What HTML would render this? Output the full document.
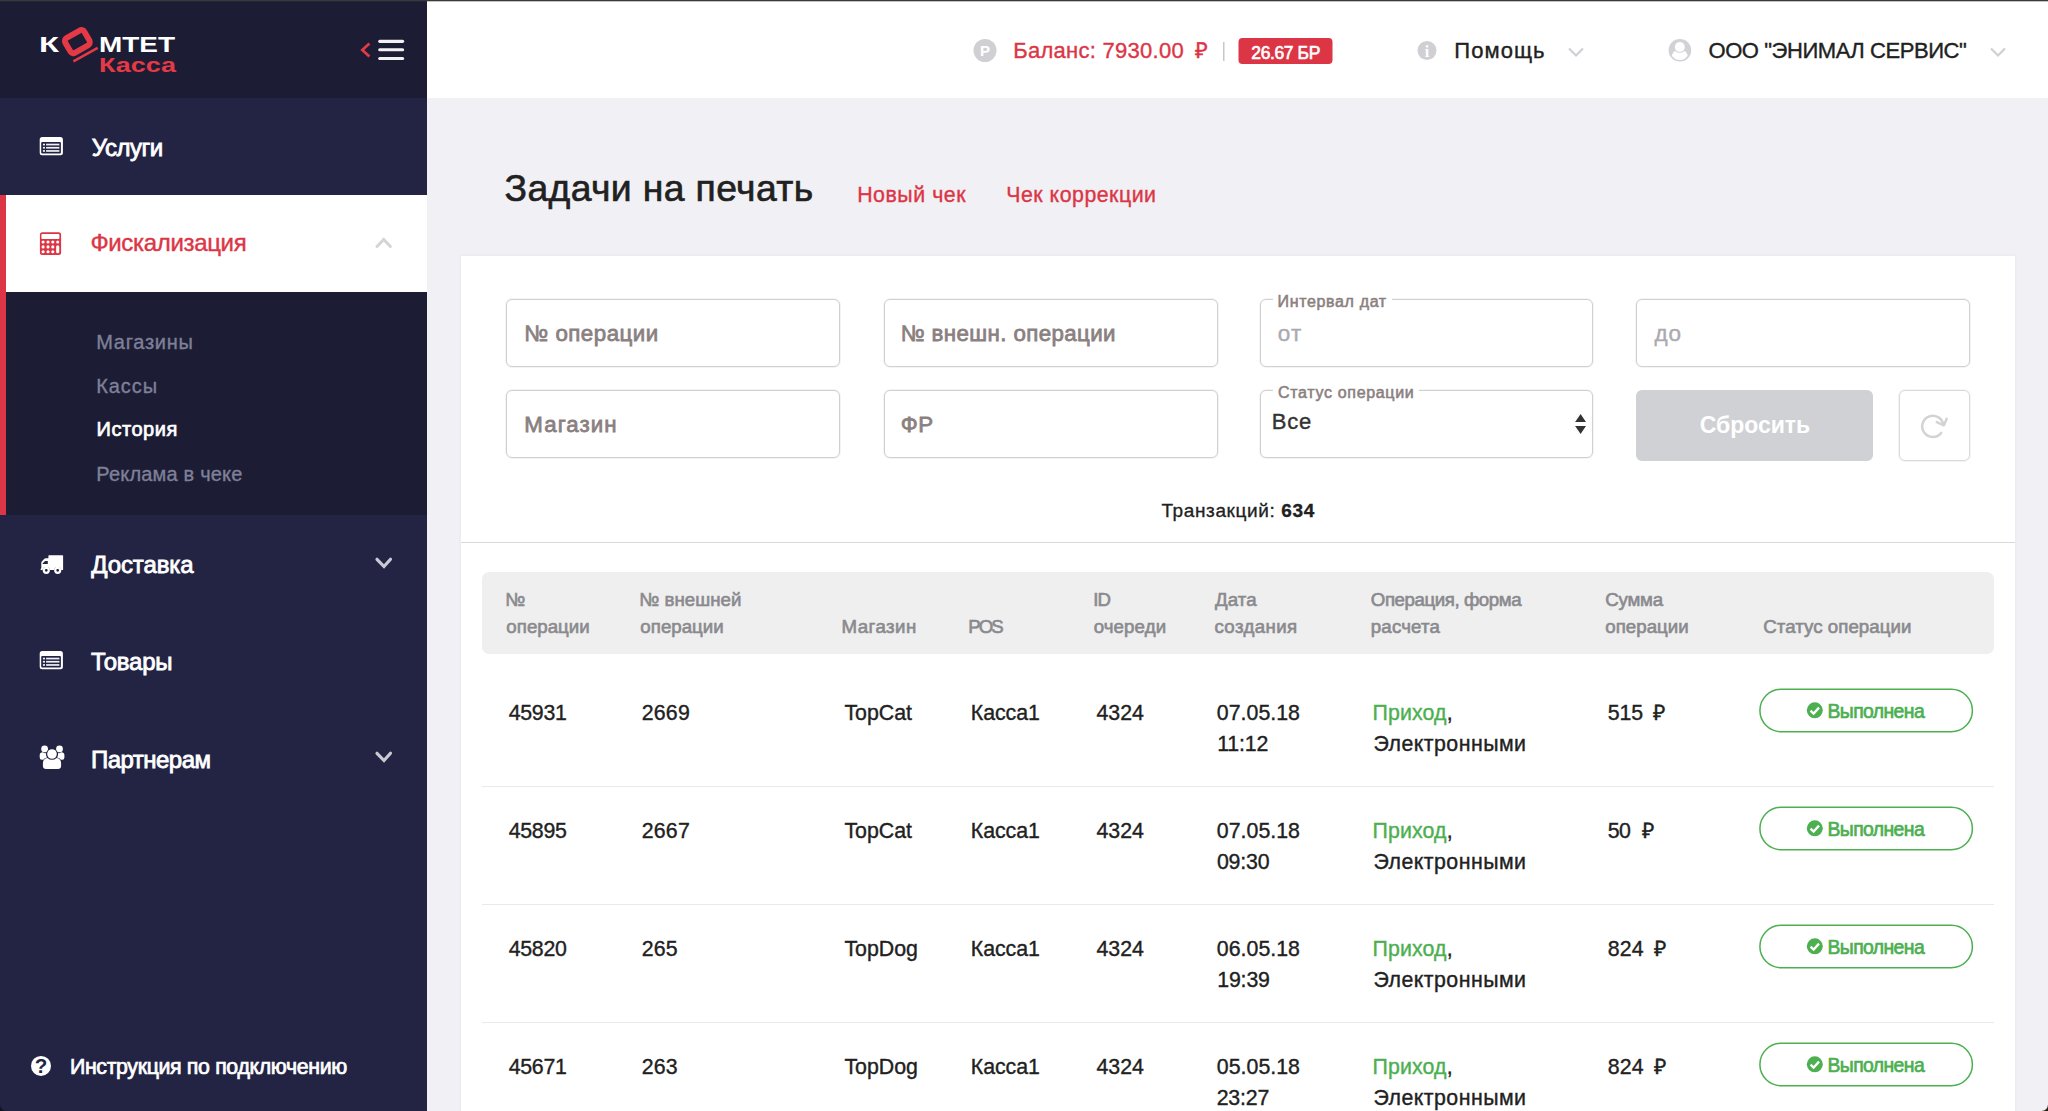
<!DOCTYPE html>
<html lang="ru">
<head>
<meta charset="utf-8">
<title>Задачи на печать</title>
<style>
*{box-sizing:border-box;margin:0;padding:0}
html,body{width:2048px;height:1111px;overflow:hidden;background:#f0f0f5}
body{font-family:"Liberation Sans",sans-serif;color:#212121;position:relative}
.abs{position:absolute}
.t{position:absolute;white-space:nowrap;line-height:1}
.inp{position:absolute;border:1px solid #d0d0d0;border-radius:6px;background:#fff;box-shadow:0 0 0 1px rgba(0,0,0,0.045)}
.gap{position:absolute;background:#fff;height:4px}
.sep{position:absolute;left:482px;width:1512px;height:1px;background:#e9e9e9}
.badge{position:absolute;left:1759px;width:214px;height:44px;border:1.5px solid #4caf50;border-radius:22px}
</style>
</head>
<body>
<div class="abs" style="left:0;top:0;width:427px;height:1111px;background:#232444"></div>
<div class="abs" style="left:0;top:0;width:427px;height:98px;background:#1c1d35"></div>
<svg class="abs" style="left:0;top:0" width="427" height="98" viewBox="0 0 427 98">
<text x="39" y="52" font-family="Liberation Sans, sans-serif" font-weight="bold" font-size="22.500" fill="#fff" textLength="20" lengthAdjust="spacingAndGlyphs">К</text>
<g transform="rotate(-30 77.400 41.600)"><rect x="66.400" y="33.100" width="22" height="17" rx="3.400" fill="none" stroke="#e63946" stroke-width="5.800"/></g><path d="M73.400 61.300 L97.700 47.900" stroke="#e63946" stroke-width="2.500" fill="none"/>
<text x="99" y="52" font-family="Liberation Sans, sans-serif" font-weight="bold" font-size="22.500" fill="#fff" textLength="76" lengthAdjust="spacingAndGlyphs">МТЕТ</text>
<text x="99" y="72" font-family="Liberation Sans, sans-serif" font-weight="bold" font-size="19.5" fill="#e63946" textLength="77" lengthAdjust="spacingAndGlyphs">Касса</text>
<path d="M369.400 43.500 L362.300 50 L369.400 56.500" fill="none" stroke="#e63946" stroke-width="2.700"/>
<rect x="378.200" y="39.800" width="26" height="3.100" rx="1.550" fill="#f2f2f2"/><rect x="378.200" y="48.200" width="26" height="3.100" rx="1.550" fill="#f2f2f2"/><rect x="378.200" y="56.900" width="26" height="3.100" rx="1.550" fill="#f2f2f2"/>
</svg>
<div class="abs" style="left:0;top:195px;width:427px;height:97px;background:#fff"></div>
<div class="abs" style="left:0;top:292px;width:427px;height:223px;background:#1c1d35"></div>
<div class="abs" style="left:0;top:195px;width:6px;height:320px;background:#dc3545"></div>
<svg class="abs" style="left:38px;top:135px" width="28" height="23" viewBox="38 135 28 23"><path fill-rule="evenodd" fill="#fff" d="M42.2 136.9 h18.200 a2.5 2.5 0 0 1 2.5 2.5 v13.300 a2.5 2.5 0 0 1 -2.5 2.5 h-18.200 a2.5 2.500 0 0 1 -2.5 -2.5 v-13.300 a2.5 2.5 0 0 1 2.5 -2.5z M42.2 142.1 a1 1 0 0 0 -1 1 v9.300 a1 1 0 0 0 1 1 h17.700 a1 1 0 0 0 1 -1 v-9.300 a1 1 0 0 0 -1 -1z"/>
<g fill="#f0f0f4"><rect x="42.9" y="143.7" width="2.1" height="1.7"/><rect x="46.1" y="143.7" width="13.3" height="1.7"/><rect x="42.9" y="146.9" width="2.1" height="1.7"/><rect x="46.1" y="146.9" width="13.3" height="1.7"/><rect x="42.9" y="150.1" width="2.100" height="1.7"/><rect x="46.1" y="150.1" width="13.3" height="1.7"/></g></svg>
<svg class="abs" style="left:38px;top:229px" width="28" height="28" viewBox="38 229 28 28"><path fill-rule="evenodd" fill="#dc3545" d="M42.4 232.200 h16.200 a2.5 2.5 0 0 1 2.5 2.5 v17.800 a2.5 2.5 0 0 1 -2.5 2.5 h-16.200 a2.5 2.5 0 0 1 -2.5 -2.5 v-17.800 a2.5 2.500 0 0 1 2.5 -2.5z M42.4 233.900 a1 1 0 0 0 -1 1 v3 a1 1 0 0 0 1 1 h16 a1 1 0 0 0 1 -1 v-3 a1 1 0 0 0 -1 -1z"/>
<g fill="#fff"><circle cx="43.100" cy="242" r="1.550"/><circle cx="48" cy="242" r="1.55"/><circle cx="52.8" cy="242" r="1.55"/><circle cx="57.7" cy="242" r="1.550"/>
<circle cx="43.1" cy="246.9" r="1.55"/><circle cx="48" cy="246.9" r="1.55"/><circle cx="52.8" cy="246.9" r="1.55"/>
<circle cx="43.1" cy="251.7" r="1.55"/><circle cx="48" cy="251.7" r="1.55"/><circle cx="52.8" cy="251.700" r="1.55"/>
<rect x="56.15" y="245.3" width="3.1" height="8" rx="1.55"/></g></svg>
<svg class="abs" style="left:372px;top:234px" width="24" height="18" viewBox="372 234 24 18"><path d="M377 246.500 L383.700 239.500 L390.400 246.500" fill="none" stroke="#d4d5d9" stroke-width="3" stroke-linecap="round"/></svg>
<svg class="abs" style="left:38px;top:553px" width="28" height="24" viewBox="38 553 28 24"><path fill="#fff" d="M58.300 555.200 h4.200 a0.6 0.6 0 0 1 0.600 0.600 v13.700 a0.6 0.6 0 0 1 -0.600 0.600 h-1.200 a3.700 3.700 0 0 0 -7.300 0 h-4.100 a3.700 3.700 0 0 0 -7.300 0 h-1.400 a0.600 0.600 0 0 1 -0.600 -0.900 l0.700 -1.200 v-5.200 q0 -0.700 0.500 -1.300 l2.600 -2.700 q0.500 -0.500 1.300 -0.500 h2.700 v-2.500 a0.600 0.600 0 0 1 0.600 -0.600z M47.800 560.900 h-2.300 q-0.400 0 -0.700 0.300 l-2 2.100 q-0.200 0.200 -0.200 0.500 v0.200 h5.200z"/>
<circle cx="46.300" cy="570.300" r="2.500" fill="none" stroke="#fff" stroke-width="2.200"/><circle cx="57.700" cy="570.300" r="2.500" fill="none" stroke="#fff" stroke-width="2.200"/></svg>
<svg class="abs" style="left:374px;top:556px" width="20" height="14" viewBox="0 0 20 14"><path d="M3 3.300 L10 10.500 L16.500 3.300" fill="none" stroke="#c9cad3" stroke-width="3.200" stroke-linecap="round"/></svg>
<svg class="abs" style="left:38px;top:649px" width="28" height="23" viewBox="38 649 28 23"><path fill-rule="evenodd" fill="#fff" d="M42.2 650.9 h18.200 a2.5 2.5 0 0 1 2.5 2.5 v13.300 a2.5 2.5 0 0 1 -2.5 2.5 h-18.200 a2.5 2.500 0 0 1 -2.5 -2.5 v-13.300 a2.5 2.5 0 0 1 2.5 -2.5z M42.2 656.1 a1 1 0 0 0 -1 1 v9.300 a1 1 0 0 0 1 1 h17.700 a1 1 0 0 0 1 -1 v-9.300 a1 1 0 0 0 -1 -1z"/>
<g fill="#f0f0f4"><rect x="42.9" y="657.7" width="2.1" height="1.7"/><rect x="46.1" y="657.7" width="13.3" height="1.7"/><rect x="42.9" y="660.9" width="2.1" height="1.7"/><rect x="46.1" y="660.9" width="13.3" height="1.7"/><rect x="42.9" y="664.1" width="2.100" height="1.7"/><rect x="46.1" y="664.1" width="13.3" height="1.7"/></g></svg>
<svg class="abs" style="left:38px;top:743px" width="28" height="28" viewBox="38 743 28 28"><g fill="#fff">
<circle cx="44.600" cy="748.900" r="3.400"/><circle cx="59.500" cy="748.900" r="3.400"/>
<path d="M39.700 757.500 v-2.400 q0 -2.700 3.100 -2.900 q1.200 1.200 3.300 0.900 q-0.500 2.500 0.900 4.300 q-2.500 0.300 -3.700 2.400 h-1.400 q-2.200 0 -2.200 -2.300z"/>
<path d="M64.400 757.500 v-2.400 q0 -2.700 -3.100 -2.900 q-1.200 1.200 -3.300 0.900 q0.500 2.500 -0.900 4.300 q2.500 0.300 3.700 2.400 h1.400 q2.200 0 2.200 -2.300z"/>
<circle cx="52" cy="754" r="5.600" fill="#232444"/><circle cx="52" cy="754" r="4.800"/>
<path d="M42.900 765.800 v-2.400 q0 -5 4.500 -5.500 q2 1.900 4.600 1.900 q2.600 0 4.600 -1.900 q4.500 0.500 4.500 5.500 v2.400 q0 3.300 -3.300 3.300 h-11.600 q-3.300 0 -3.300 -3.300z"/>
</g></svg>
<svg class="abs" style="left:374px;top:750px" width="20" height="14" viewBox="0 0 20 14"><path d="M3 3.300 L10 10.500 L16.500 3.300" fill="none" stroke="#c9cad3" stroke-width="3.200" stroke-linecap="round"/></svg>
<svg class="abs" style="left:29px;top:1054px" width="24" height="24" viewBox="28.5 1054 24 24"><circle cx="40.500" cy="1065.900" r="10" fill="#fff"/>
<text x="40.500" y="1073.100" text-anchor="middle" font-family="Liberation Sans, sans-serif" font-weight="bold" font-size="20.500" fill="#232444">?</text></svg>
<div class="abs" style="left:427px;top:0;width:1621px;height:98px;background:#fff"></div>
<svg class="abs" style="left:427px;top:0" width="1621" height="98" viewBox="427 0 1621 98">
<circle cx="985" cy="50.5" r="11.5" fill="#d0d0d4"/>
<text x="985" y="56" text-anchor="middle" font-family="Liberation Sans, sans-serif" font-weight="bold" font-size="15" fill="#fff">Р</text>
<circle cx="1427" cy="50.5" r="9.5" fill="#d0d0d4"/>
<text x="1427" y="56.5" text-anchor="middle" font-family="Liberation Serif, serif" font-weight="bold" font-size="16" fill="#fff">i</text>
<circle cx="1679.900" cy="50.300" r="11.300" fill="#d1d2d6"/>
<circle cx="1679.800" cy="47" r="5" fill="#fff"/>
<path d="M1671.900 55.800 C1672.400 53 1673.800 51.300 1675.300 50.900 A6.300 6.300 0 0 0 1684.300 50.900 C1685.800 51.300 1687.200 53 1687.700 55.800 A9.400 9.400 0 0 1 1671.900 55.800Z" fill="#fff"/>
<path d="M1569 48.5 L1576 55.5 L1583 48.5" fill="none" stroke="#d0d0d4" stroke-width="2.2"/>
<path d="M1991 48.5 L1998 55.5 L2005 48.5" fill="none" stroke="#d0d0d4" stroke-width="2.2"/>
<rect x="1223" y="42" width="1.5" height="19" fill="#c8c8cc"/>
<rect x="1238.500" y="38" width="94" height="26" rx="4" fill="#dc3545"/>
</svg>
<div class="abs" style="left:461px;top:256px;width:1554px;height:860px;background:#fff;box-shadow:0 0 3px rgba(40,40,80,0.07)"></div>
<div class="inp" style="left:506px;top:299px;width:334px;height:68px"></div>
<div class="inp" style="left:883.500px;top:299px;width:334px;height:68px"></div>
<div class="inp" style="left:1260px;top:299px;width:333px;height:68px"></div>
<div class="inp" style="left:1636px;top:299px;width:334px;height:68px"></div>
<div class="inp" style="left:506px;top:390px;width:334px;height:68px"></div>
<div class="inp" style="left:883.500px;top:390px;width:334px;height:68px"></div>
<div class="inp" style="left:1260px;top:390px;width:333px;height:68px"></div>
<div class="gap" style="left:1273px;top:297px;width:119px"></div>
<div class="gap" style="left:1273px;top:388px;width:146px"></div>
<svg class="abs" style="left:1573px;top:412px" width="16" height="24" viewBox="1573 412 16 24"><path d="M1580.600 414 L1586 422.100 L1575.100 422.100Z M1580.600 433.900 L1586 426 L1575.100 426Z" fill="#333"/></svg>
<div class="abs" style="left:1635.500px;top:390px;width:237.500px;height:71px;background:#d0d1d5;border-radius:6px"></div>
<div class="inp" style="left:1899px;top:390px;width:71px;height:71px;border-color:#dadada"></div>
<svg class="abs" style="left:1916px;top:410px" width="36" height="32" viewBox="1916 410 36 32"><g fill="none" stroke="#d3d3d3" stroke-width="2.500" stroke-linecap="round" stroke-linejoin="round"><path d="M1941.150 432.900 A10.600 10.600 0 1 1 1943.300 424.900"/><path d="M1936.800 422.100 L1943.900 425.300 L1946.700 418.700"/></g></svg>
<div class="abs" style="left:461px;top:542px;width:1554px;height:1px;background:#d9d9d9"></div>
<div class="abs" style="left:482px;top:572px;width:1512px;height:82px;background:#efefef;border-radius:7px"></div>
<svg class="abs" style="left:1757px;top:686px" width="220" height="50" viewBox="1757 686 220 50"><rect x="1759.900" y="689.35" width="212.500" height="42.300" rx="21.150" fill="#fff" stroke="#4caf50" stroke-width="1.500"/><circle cx="1814.800" cy="710.3" r="8" fill="#4caf50"/><path d="M1810.500 710.6 l3.100 2.900 l5.400 -5.900" fill="none" stroke="#fff" stroke-width="2.300"/></svg>
<div class="sep" style="top:786px"></div>
<svg class="abs" style="left:1757px;top:804px" width="220" height="50" viewBox="1757 804 220 50"><rect x="1759.900" y="807.35" width="212.500" height="42.300" rx="21.150" fill="#fff" stroke="#4caf50" stroke-width="1.500"/><circle cx="1814.800" cy="828.3" r="8" fill="#4caf50"/><path d="M1810.500 828.6 l3.100 2.900 l5.400 -5.900" fill="none" stroke="#fff" stroke-width="2.300"/></svg>
<div class="sep" style="top:904px"></div>
<svg class="abs" style="left:1757px;top:922px" width="220" height="50" viewBox="1757 922 220 50"><rect x="1759.900" y="925.35" width="212.500" height="42.300" rx="21.150" fill="#fff" stroke="#4caf50" stroke-width="1.500"/><circle cx="1814.800" cy="946.3" r="8" fill="#4caf50"/><path d="M1810.500 946.6 l3.100 2.900 l5.400 -5.900" fill="none" stroke="#fff" stroke-width="2.300"/></svg>
<div class="sep" style="top:1022px"></div>
<svg class="abs" style="left:1757px;top:1040px" width="220" height="50" viewBox="1757 1040 220 50"><rect x="1759.900" y="1043.35" width="212.500" height="42.300" rx="21.150" fill="#fff" stroke="#4caf50" stroke-width="1.500"/><circle cx="1814.800" cy="1064.3" r="8" fill="#4caf50"/><path d="M1810.500 1064.6 l3.100 2.900 l5.400 -5.900" fill="none" stroke="#fff" stroke-width="2.300"/></svg>

<div class="t" id="m1" style="left:91.71px;top:135.69px;font-size:24px;color:#fff;letter-spacing:-0.46px;-webkit-text-stroke:0.82px #fff">Услуги</div>
<div class="t" id="m2" style="left:90.38px;top:231.28px;font-size:24px;color:#dc3545;letter-spacing:-0.33px;-webkit-text-stroke:0.41px #dc3545">Фискализация</div>
<div class="t" id="s1" style="left:96.22px;top:332.03px;font-size:20px;color:#7f8098;letter-spacing:0.73px;-webkit-text-stroke:0.34px #7f8098">Магазины</div>
<div class="t" id="s2" style="left:96.22px;top:376.23px;font-size:20px;color:#7f8098;letter-spacing:0.91px;-webkit-text-stroke:0.34px #7f8098">Кассы</div>
<div class="t" id="s3" style="left:96.47px;top:419.25px;font-size:20px;color:#fff;letter-spacing:0.54px;-webkit-text-stroke:0.68px #fff">История</div>
<div class="t" id="s4" style="left:96.22px;top:464.43px;font-size:20px;color:#7f8098;letter-spacing:0.2px;-webkit-text-stroke:0.34px #7f8098">Реклама в чеке</div>
<div class="t" id="m3" style="left:91.34px;top:553.01px;font-size:24px;color:#fff;letter-spacing:-0.12px;-webkit-text-stroke:0.82px #fff">Доставка</div>
<div class="t" id="m4" style="left:91.07px;top:650.36px;font-size:24px;color:#fff;letter-spacing:-0.22px;-webkit-text-stroke:0.82px #fff">Товары</div>
<div class="t" id="m5" style="left:91.03px;top:747.69px;font-size:24px;color:#fff;letter-spacing:-0.53px;-webkit-text-stroke:0.82px #fff">Партнерам</div>
<div class="t" id="ins" style="left:69.94px;top:1056.9px;font-size:21.33px;color:#fff;letter-spacing:-0.35px;-webkit-text-stroke:0.73px #fff">Инструкция по подключению</div>
<div class="t" id="bal" style="left:1013.31px;top:39.91px;font-size:22px;color:#dc3545;letter-spacing:0.27px;-webkit-text-stroke:0.37px #dc3545">Баланс: 7930.00</div>
<div class="t" id="rub" style="left:1194.52px;top:39.91px;font-size:22px;color:#dc3545;-webkit-text-stroke:0.37px #dc3545">₽</div>
<div class="t" id="bdg" style="left:1251.33px;top:45.2px;font-size:17.5px;color:#fff;letter-spacing:-0.4px;-webkit-text-stroke:0.6px #fff">26.67 БР</div>
<div class="t" id="hlp" style="left:1454.37px;top:39.91px;font-size:22px;color:#212121;letter-spacing:1.04px;-webkit-text-stroke:0.37px #212121">Помощь</div>
<div class="t" id="org" style="left:1708.53px;top:39.91px;font-size:22px;color:#212121;letter-spacing:-0.44px;-webkit-text-stroke:0.37px #212121">ООО "ЭНИМАЛ СЕРВИС"</div>
<div class="t" id="ttl" style="left:504.58px;top:170.31px;font-size:37.33px;color:#212121;letter-spacing:0.36px;-webkit-text-stroke:0.63px #212121">Задачи на печать</div>
<div class="t" id="l1" style="left:857.13px;top:184.82px;font-size:21.33px;color:#dc3545;letter-spacing:0.54px;-webkit-text-stroke:0.36px #dc3545">Новый чек</div>
<div class="t" id="l2" style="left:1006.25px;top:184.82px;font-size:21.33px;color:#dc3545;letter-spacing:0.5px;-webkit-text-stroke:0.36px #dc3545">Чек коррекции</div>
<div class="t" id="i1" style="left:524.37px;top:323.14px;font-size:22.3px;color:#8a8080;letter-spacing:0.48px;-webkit-text-stroke:0.76px #8a8080">№ операции</div>
<div class="t" id="i2" style="left:900.73px;top:323.14px;font-size:22.3px;color:#8a8080;letter-spacing:0.38px;-webkit-text-stroke:0.76px #8a8080">№ внешн. операции</div>
<div class="t" id="i3" style="left:1277.82px;top:323.12px;font-size:22.5px;color:#aaaab0;letter-spacing:1.18px;-webkit-text-stroke:0.38px #aaaab0">от</div>
<div class="t" id="i4" style="left:1654.38px;top:323.12px;font-size:22.5px;color:#aaaab0;letter-spacing:1.04px;-webkit-text-stroke:0.38px #aaaab0">до</div>
<div class="t" id="lb1" style="left:1277.61px;top:293.91px;font-size:16px;color:#8a8080;letter-spacing:0.64px;-webkit-text-stroke:0.54px #8a8080">Интервал дат</div>
<div class="t" id="lb2" style="left:1278.02px;top:384.71px;font-size:16px;color:#8a8080;letter-spacing:0.67px;-webkit-text-stroke:0.54px #8a8080">Статус операции</div>
<div class="t" id="i5" style="left:524.29px;top:414.04px;font-size:22.3px;color:#8a8080;letter-spacing:1.06px;-webkit-text-stroke:0.76px #8a8080">Магазин</div>
<div class="t" id="i6" style="left:900.64px;top:414.04px;font-size:22.3px;color:#8a8080;letter-spacing:0.72px;-webkit-text-stroke:0.76px #8a8080">ФР</div>
<div class="t" id="sel" style="left:1271.87px;top:411.03px;font-size:22px;color:#333;letter-spacing:0.7px;-webkit-text-stroke:0.37px #333">Все</div>
<div class="t" id="rst" style="left:1699.7px;top:414.4px;font-size:23px;color:#fff;letter-spacing:-0.03px;font-weight:bold">Сбросить</div>
<div class="t" id="trn" style="left:1161.44px;top:500.98px;font-size:19px;color:#212121;letter-spacing:0.62px;-webkit-text-stroke:0.32px #212121">Транзакций: <b>634</b></div>
<div class="t" id="h1a" style="left:505.17px;top:590.83px;font-size:18.67px;color:#8a8a8e;-webkit-text-stroke:0.63px #8a8a8e">№</div>
<div class="t" id="h1b" style="left:506.37px;top:618.12px;font-size:18.67px;color:#8a8a8e;letter-spacing:0.03px;-webkit-text-stroke:0.63px #8a8a8e">операции</div>
<div class="t" id="h2a" style="left:639.17px;top:590.83px;font-size:18.67px;color:#8a8a8e;letter-spacing:0.05px;-webkit-text-stroke:0.63px #8a8a8e">№ внешней</div>
<div class="t" id="h2b" style="left:640.37px;top:618.12px;font-size:18.67px;color:#8a8a8e;letter-spacing:0.03px;-webkit-text-stroke:0.63px #8a8a8e">операции</div>
<div class="t" id="h3" style="left:841.55px;top:617.77px;font-size:18.67px;color:#8a8a8e;letter-spacing:0.45px;-webkit-text-stroke:0.63px #8a8a8e">Магазин</div>
<div class="t" id="h4" style="left:968.37px;top:617.77px;font-size:18.67px;color:#8a8a8e;letter-spacing:-2.02px;-webkit-text-stroke:0.63px #8a8a8e">POS</div>
<div class="t" id="h5a" style="left:1093.17px;top:590.83px;font-size:18.67px;color:#8a8a8e;letter-spacing:-0.95px;-webkit-text-stroke:0.63px #8a8a8e">ID</div>
<div class="t" id="h5b" style="left:1093.64px;top:618.12px;font-size:18.67px;color:#8a8a8e;letter-spacing:0.14px;-webkit-text-stroke:0.63px #8a8a8e">очереди</div>
<div class="t" id="h6a" style="left:1214.89px;top:590.83px;font-size:18.67px;color:#8a8a8e;letter-spacing:0.18px;-webkit-text-stroke:0.63px #8a8a8e">Дата</div>
<div class="t" id="h6b" style="left:1214.42px;top:618.12px;font-size:18.67px;color:#8a8a8e;letter-spacing:0.4px;-webkit-text-stroke:0.63px #8a8a8e">создания</div>
<div class="t" id="h7a" style="left:1370.8px;top:590.83px;font-size:18.67px;color:#8a8a8e;letter-spacing:-0.42px;-webkit-text-stroke:0.63px #8a8a8e">Операция, форма</div>
<div class="t" id="h7b" style="left:1370.85px;top:618.12px;font-size:18.67px;color:#8a8a8e;letter-spacing:0.15px;-webkit-text-stroke:0.63px #8a8a8e">расчета</div>
<div class="t" id="h8a" style="left:1605.16px;top:590.83px;font-size:18.67px;color:#8a8a8e;letter-spacing:-0.15px;-webkit-text-stroke:0.63px #8a8a8e">Сумма</div>
<div class="t" id="h8b" style="left:1605.37px;top:618.12px;font-size:18.67px;color:#8a8a8e;letter-spacing:0.01px;-webkit-text-stroke:0.63px #8a8a8e">операции</div>
<div class="t" id="h9" style="left:1763.22px;top:617.77px;font-size:18.67px;color:#8a8a8e;letter-spacing:0.06px;-webkit-text-stroke:0.63px #8a8a8e">Статус операции</div>
<div class="t" id="r0c1" style="left:508.63px;top:702.5px;font-size:21.33px;color:#212121;letter-spacing:-0.26px;-webkit-text-stroke:0.36px #212121">45931</div>
<div class="t" id="r0c2" style="left:641.75px;top:702.5px;font-size:21.33px;color:#212121;letter-spacing:0.2px;-webkit-text-stroke:0.36px #212121">2669</div>
<div class="t" id="r0c3" style="left:844.42px;top:702.5px;font-size:21.33px;color:#212121;letter-spacing:0.01px;-webkit-text-stroke:0.36px #212121">TopCat</div>
<div class="t" id="r0c4" style="left:970.76px;top:702.5px;font-size:21.33px;color:#212121;letter-spacing:-0.03px;-webkit-text-stroke:0.36px #212121">Касса1</div>
<div class="t" id="r0c5" style="left:1096.39px;top:702.5px;font-size:21.33px;color:#212121;letter-spacing:0.02px;-webkit-text-stroke:0.36px #212121">4324</div>
<div class="t" id="r0c6a" style="left:1216.83px;top:702.5px;font-size:21.33px;color:#212121;letter-spacing:0.01px;-webkit-text-stroke:0.36px #212121">07.05.18</div>
<div class="t" id="r0c6b" style="left:1217.14px;top:733.56px;font-size:21.33px;color:#212121;letter-spacing:-0.15px;-webkit-text-stroke:0.36px #212121">11:12</div>
<div class="t" id="r0c7a" style="left:1372.62px;top:702.5px;font-size:21.33px;color:#212121;letter-spacing:0.11px;-webkit-text-stroke:0.36px #212121"><span style="color:#4caf50;-webkit-text-stroke-color:#4caf50">Приход</span>,</div>
<div class="t" id="r0c7b" style="left:1373.38px;top:733.56px;font-size:21.33px;color:#212121;letter-spacing:0.47px;-webkit-text-stroke:0.36px #212121">Электронными</div>
<div class="t" id="r0c8" style="left:1607.76px;top:702.5px;font-size:21.33px;color:#212121;letter-spacing:-0.17px;-webkit-text-stroke:0.36px #212121">515</div>
<div class="t" id="r0c9" style="left:1652.71px;top:702.5px;font-size:21.33px;color:#212121;-webkit-text-stroke:0.36px #212121">₽</div>
<div class="t" id="r0c10" style="left:1827.52px;top:701.73px;font-size:19.4px;color:#4caf50;letter-spacing:-0.61px;-webkit-text-stroke:0.66px #4caf50">Выполнена</div>
<div class="t" id="r1c1" style="left:508.63px;top:820.5px;font-size:21.33px;color:#212121;letter-spacing:-0.26px;-webkit-text-stroke:0.36px #212121">45895</div>
<div class="t" id="r1c2" style="left:641.75px;top:820.5px;font-size:21.33px;color:#212121;letter-spacing:0.2px;-webkit-text-stroke:0.36px #212121">2667</div>
<div class="t" id="r1c3" style="left:844.42px;top:820.5px;font-size:21.33px;color:#212121;letter-spacing:0.01px;-webkit-text-stroke:0.36px #212121">TopCat</div>
<div class="t" id="r1c4" style="left:970.76px;top:820.5px;font-size:21.33px;color:#212121;letter-spacing:-0.03px;-webkit-text-stroke:0.36px #212121">Касса1</div>
<div class="t" id="r1c5" style="left:1096.39px;top:820.5px;font-size:21.33px;color:#212121;letter-spacing:0.02px;-webkit-text-stroke:0.36px #212121">4324</div>
<div class="t" id="r1c6a" style="left:1216.83px;top:820.5px;font-size:21.33px;color:#212121;letter-spacing:0.01px;-webkit-text-stroke:0.36px #212121">07.05.18</div>
<div class="t" id="r1c6b" style="left:1216.92px;top:851.56px;font-size:21.33px;color:#212121;letter-spacing:-0.15px;-webkit-text-stroke:0.36px #212121">09:30</div>
<div class="t" id="r1c7a" style="left:1372.62px;top:820.5px;font-size:21.33px;color:#212121;letter-spacing:0.11px;-webkit-text-stroke:0.36px #212121"><span style="color:#4caf50;-webkit-text-stroke-color:#4caf50">Приход</span>,</div>
<div class="t" id="r1c7b" style="left:1373.38px;top:851.56px;font-size:21.33px;color:#212121;letter-spacing:0.47px;-webkit-text-stroke:0.36px #212121">Электронными</div>
<div class="t" id="r1c8" style="left:1607.76px;top:820.5px;font-size:21.33px;color:#212121;letter-spacing:-0.52px;-webkit-text-stroke:0.36px #212121">50</div>
<div class="t" id="r1c9" style="left:1641.51px;top:820.5px;font-size:21.33px;color:#212121;-webkit-text-stroke:0.36px #212121">₽</div>
<div class="t" id="r1c10" style="left:1827.52px;top:819.73px;font-size:19.4px;color:#4caf50;letter-spacing:-0.61px;-webkit-text-stroke:0.66px #4caf50">Выполнена</div>
<div class="t" id="r2c1" style="left:508.63px;top:938.5px;font-size:21.33px;color:#212121;letter-spacing:-0.26px;-webkit-text-stroke:0.36px #212121">45820</div>
<div class="t" id="r2c2" style="left:641.75px;top:938.5px;font-size:21.33px;color:#212121;letter-spacing:0.2px;-webkit-text-stroke:0.36px #212121">265</div>
<div class="t" id="r2c3" style="left:844.42px;top:938.5px;font-size:21.33px;color:#212121;letter-spacing:0.01px;-webkit-text-stroke:0.36px #212121">TopDog</div>
<div class="t" id="r2c4" style="left:970.76px;top:938.5px;font-size:21.33px;color:#212121;letter-spacing:-0.03px;-webkit-text-stroke:0.36px #212121">Касса1</div>
<div class="t" id="r2c5" style="left:1096.39px;top:938.5px;font-size:21.33px;color:#212121;letter-spacing:0.02px;-webkit-text-stroke:0.36px #212121">4324</div>
<div class="t" id="r2c6a" style="left:1216.83px;top:938.5px;font-size:21.33px;color:#212121;letter-spacing:0.01px;-webkit-text-stroke:0.36px #212121">06.05.18</div>
<div class="t" id="r2c6b" style="left:1217.19px;top:969.56px;font-size:21.33px;color:#212121;letter-spacing:-0.15px;-webkit-text-stroke:0.36px #212121">19:39</div>
<div class="t" id="r2c7a" style="left:1372.62px;top:938.5px;font-size:21.33px;color:#212121;letter-spacing:0.11px;-webkit-text-stroke:0.36px #212121"><span style="color:#4caf50;-webkit-text-stroke-color:#4caf50">Приход</span>,</div>
<div class="t" id="r2c7b" style="left:1373.38px;top:969.56px;font-size:21.33px;color:#212121;letter-spacing:0.47px;-webkit-text-stroke:0.36px #212121">Электронными</div>
<div class="t" id="r2c8" style="left:1607.76px;top:938.5px;font-size:21.33px;color:#212121;letter-spacing:0.15px;-webkit-text-stroke:0.36px #212121">824</div>
<div class="t" id="r2c9" style="left:1654.04px;top:938.5px;font-size:21.33px;color:#212121;-webkit-text-stroke:0.36px #212121">₽</div>
<div class="t" id="r2c10" style="left:1827.52px;top:937.73px;font-size:19.4px;color:#4caf50;letter-spacing:-0.61px;-webkit-text-stroke:0.66px #4caf50">Выполнена</div>
<div class="t" id="r3c1" style="left:508.63px;top:1056.5px;font-size:21.33px;color:#212121;letter-spacing:-0.26px;-webkit-text-stroke:0.36px #212121">45671</div>
<div class="t" id="r3c2" style="left:641.75px;top:1056.5px;font-size:21.33px;color:#212121;letter-spacing:0.2px;-webkit-text-stroke:0.36px #212121">263</div>
<div class="t" id="r3c3" style="left:844.42px;top:1056.5px;font-size:21.33px;color:#212121;letter-spacing:0.01px;-webkit-text-stroke:0.36px #212121">TopDog</div>
<div class="t" id="r3c4" style="left:970.76px;top:1056.5px;font-size:21.33px;color:#212121;letter-spacing:-0.03px;-webkit-text-stroke:0.36px #212121">Касса1</div>
<div class="t" id="r3c5" style="left:1096.39px;top:1056.5px;font-size:21.33px;color:#212121;letter-spacing:0.02px;-webkit-text-stroke:0.36px #212121">4324</div>
<div class="t" id="r3c6a" style="left:1216.83px;top:1056.5px;font-size:21.33px;color:#212121;letter-spacing:0.01px;-webkit-text-stroke:0.36px #212121">05.05.18</div>
<div class="t" id="r3c6b" style="left:1216.63px;top:1087.56px;font-size:21.33px;color:#212121;letter-spacing:-0.15px;-webkit-text-stroke:0.36px #212121">23:27</div>
<div class="t" id="r3c7a" style="left:1372.62px;top:1056.5px;font-size:21.33px;color:#212121;letter-spacing:0.11px;-webkit-text-stroke:0.36px #212121"><span style="color:#4caf50;-webkit-text-stroke-color:#4caf50">Приход</span>,</div>
<div class="t" id="r3c7b" style="left:1373.38px;top:1087.56px;font-size:21.33px;color:#212121;letter-spacing:0.47px;-webkit-text-stroke:0.36px #212121">Электронными</div>
<div class="t" id="r3c8" style="left:1607.76px;top:1056.5px;font-size:21.33px;color:#212121;letter-spacing:0.15px;-webkit-text-stroke:0.36px #212121">824</div>
<div class="t" id="r3c9" style="left:1654.04px;top:1056.5px;font-size:21.33px;color:#212121;-webkit-text-stroke:0.36px #212121">₽</div>
<div class="t" id="r3c10" style="left:1827.52px;top:1055.73px;font-size:19.4px;color:#4caf50;letter-spacing:-0.61px;-webkit-text-stroke:0.66px #4caf50">Выполнена</div>
<div class="abs" style="left:0;top:0;width:2048px;height:1px;background:#39393b"></div><div class="abs" style="left:0;top:1px;width:2048px;height:1px;background:rgba(57,57,59,0.3)"></div>
<div class="abs" style="left:2042px;top:1105px;width:6px;height:6px;background:radial-gradient(circle at 0 0,transparent 5.300px,#2b2214 6.300px)"></div>
<div class="abs" style="left:0;top:1105px;width:6px;height:6px;background:radial-gradient(circle at 100% 0,transparent 5.300px,#10131c 6.300px)"></div>
</body>
</html>
